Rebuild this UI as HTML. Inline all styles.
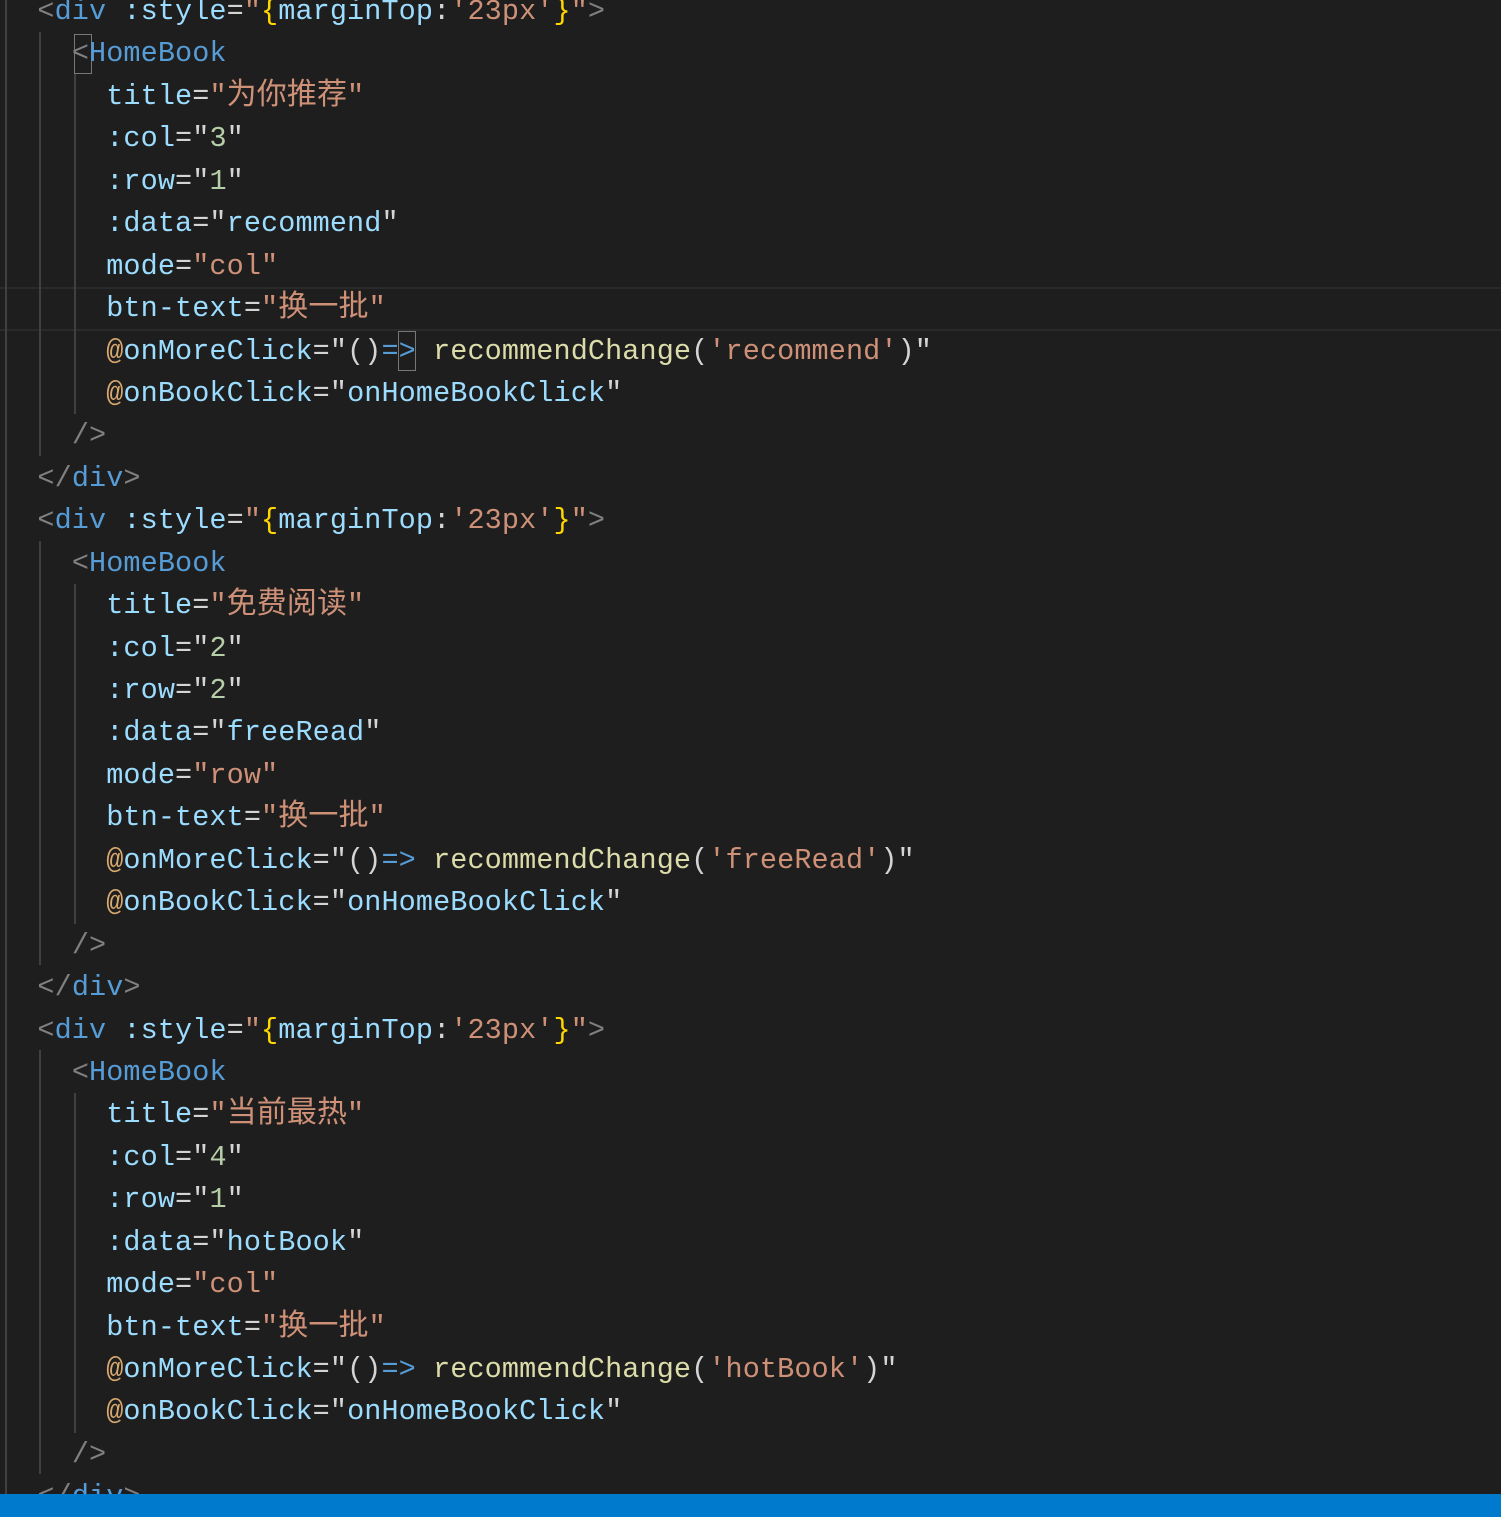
<!DOCTYPE html>
<html><head><meta charset="utf-8"><style>
html,body{margin:0;padding:0;background:#1e1e1e;width:1501px;height:1517px;overflow:hidden;position:relative}
.code{position:absolute;left:3px;top:-9px;width:1496px;font-family:"Liberation Mono","Noto Sans CJK SC",monospace;font-size:28.5px;line-height:42.44px;color:#d4d4d4;letter-spacing:0.1px}
.l{height:42.44px;white-space:pre}
.g{color:#808080}.t{color:#569cd6}.a{color:#9cdcfe}.s{color:#ce9178}.n{color:#b5cea8}.y{color:#dcdcaa}.b{color:#ffd700}.at{color:#d7a86e}
.c{font-family:"Noto Sans CJK SC",sans-serif;font-size:30px;line-height:10px}
.guide{position:absolute;width:2px;background:#404040}
.cur{position:absolute;left:0;width:1501px;top:287px;height:40px;border-top:2px solid #2a2a2a;border-bottom:2px solid #2a2a2a}
.status{position:absolute;left:0;top:1494px;width:1501px;height:23px;background:#007acc}
.box{position:absolute;border:1px solid #777}
</style></head><body>
<div class="cur"></div>
<div class="guide" style="left:5px;top:0;height:1494px"></div>
<div class="guide" style="left:39px;top:32px;height:424px"></div>
<div class="guide" style="left:74px;top:74px;height:340px"></div>
<div class="guide" style="left:39px;top:541px;height:424px"></div>
<div class="guide" style="left:74px;top:584px;height:340px"></div>
<div class="guide" style="left:39px;top:1050px;height:424px"></div>
<div class="guide" style="left:74px;top:1093px;height:340px"></div>
<div class="box" style="left:74px;top:34px;width:16px;height:38px"></div>
<div class="box" style="left:398px;top:331px;width:16px;height:38px"></div>
<div class="code"><div class="l">  <span class="g">&lt;</span><span class="t">div</span> <span class="a">:style</span>=<span class="s">"</span><span class="b">{</span><span class="a">marginTop</span>:<span class="s">'23px'</span><span class="b">}</span><span class="s">"</span><span class="g">&gt;</span></div><div class="l">    <span class="g">&lt;</span><span class="t">HomeBook</span></div><div class="l">      <span class="a">title</span>=<span class="s">"<span class="c">为你推荐</span>"</span></div><div class="l">      <span class="a">:col</span>="<span class="n">3</span>"</div><div class="l">      <span class="a">:row</span>="<span class="n">1</span>"</div><div class="l">      <span class="a">:data</span>="<span class="a">recommend</span>"</div><div class="l">      <span class="a">mode</span>=<span class="s">"col"</span></div><div class="l">      <span class="a">btn-text</span>=<span class="s">"<span class="c">换一批</span>"</span></div><div class="l">      <span class="at">@</span><span class="a">onMoreClick</span>="()<span class="t">=&gt;</span> <span class="y">recommendChange</span>(<span class="s">'recommend'</span>)"</div><div class="l">      <span class="at">@</span><span class="a">onBookClick</span>="<span class="a">onHomeBookClick</span>"</div><div class="l">    <span class="g">/&gt;</span></div><div class="l">  <span class="g">&lt;/</span><span class="t">div</span><span class="g">&gt;</span></div><div class="l">  <span class="g">&lt;</span><span class="t">div</span> <span class="a">:style</span>=<span class="s">"</span><span class="b">{</span><span class="a">marginTop</span>:<span class="s">'23px'</span><span class="b">}</span><span class="s">"</span><span class="g">&gt;</span></div><div class="l">    <span class="g">&lt;</span><span class="t">HomeBook</span></div><div class="l">      <span class="a">title</span>=<span class="s">"<span class="c">免费阅读</span>"</span></div><div class="l">      <span class="a">:col</span>="<span class="n">2</span>"</div><div class="l">      <span class="a">:row</span>="<span class="n">2</span>"</div><div class="l">      <span class="a">:data</span>="<span class="a">freeRead</span>"</div><div class="l">      <span class="a">mode</span>=<span class="s">"row"</span></div><div class="l">      <span class="a">btn-text</span>=<span class="s">"<span class="c">换一批</span>"</span></div><div class="l">      <span class="at">@</span><span class="a">onMoreClick</span>="()<span class="t">=&gt;</span> <span class="y">recommendChange</span>(<span class="s">'freeRead'</span>)"</div><div class="l">      <span class="at">@</span><span class="a">onBookClick</span>="<span class="a">onHomeBookClick</span>"</div><div class="l">    <span class="g">/&gt;</span></div><div class="l">  <span class="g">&lt;/</span><span class="t">div</span><span class="g">&gt;</span></div><div class="l">  <span class="g">&lt;</span><span class="t">div</span> <span class="a">:style</span>=<span class="s">"</span><span class="b">{</span><span class="a">marginTop</span>:<span class="s">'23px'</span><span class="b">}</span><span class="s">"</span><span class="g">&gt;</span></div><div class="l">    <span class="g">&lt;</span><span class="t">HomeBook</span></div><div class="l">      <span class="a">title</span>=<span class="s">"<span class="c">当前最热</span>"</span></div><div class="l">      <span class="a">:col</span>="<span class="n">4</span>"</div><div class="l">      <span class="a">:row</span>="<span class="n">1</span>"</div><div class="l">      <span class="a">:data</span>="<span class="a">hotBook</span>"</div><div class="l">      <span class="a">mode</span>=<span class="s">"col"</span></div><div class="l">      <span class="a">btn-text</span>=<span class="s">"<span class="c">换一批</span>"</span></div><div class="l">      <span class="at">@</span><span class="a">onMoreClick</span>="()<span class="t">=&gt;</span> <span class="y">recommendChange</span>(<span class="s">'hotBook'</span>)"</div><div class="l">      <span class="at">@</span><span class="a">onBookClick</span>="<span class="a">onHomeBookClick</span>"</div><div class="l">    <span class="g">/&gt;</span></div><div class="l">  <span class="g">&lt;/</span><span class="t">div</span><span class="g">&gt;</span></div></div>
<div class="status"></div>
</body></html>
